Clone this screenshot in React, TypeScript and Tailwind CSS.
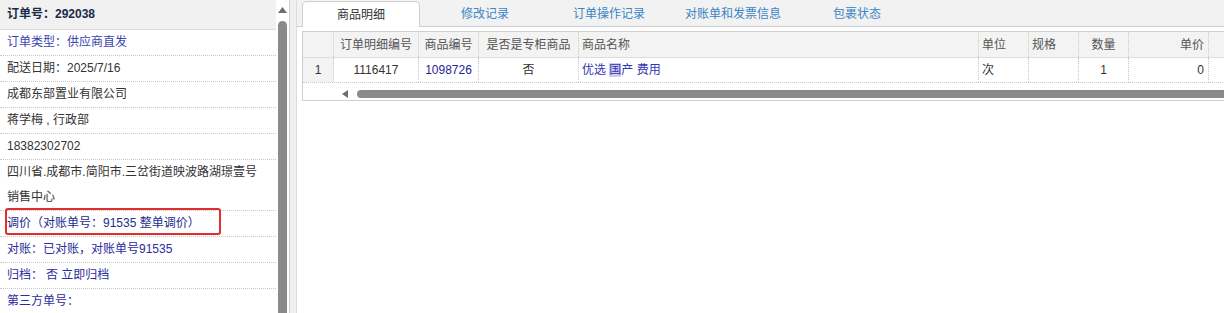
import React from "react";

const rows = [
  { text: "订单类型：供应商直发", cls: "text-[#3a43b3]" },
  { text: "配送日期：2025/7/16", cls: "text-[#333]" },
  { text: "成都东部置业有限公司", cls: "text-[#333]" },
  { text: "蒋学梅 , 行政部", cls: "text-[#333]" },
  { text: "18382302702", cls: "text-[#333]" },
];

const cols = [
  { title: "订单明细编号", w: "w-[85px]", align: "justify-center", value: "1116417", vcls: "text-[#333]" },
  { title: "商品编号", w: "w-[60px]", align: "justify-center", value: "1098726", vcls: "text-[#1f2396]" },
  { title: "是否是专柜商品", w: "w-[100px]", align: "justify-center", value: "否", vcls: "text-[#333]" },
  { title: "商品名称", w: "w-[400px]", align: "justify-start pl-[3px]", value: "", vcls: "text-[#3535b0]" },
  { title: "单位", w: "w-[50px]", align: "justify-start pl-[3px]", value: "次", vcls: "text-[#333]" },
  { title: "规格", w: "w-[50px]", align: "justify-start pl-[3px]", value: "", vcls: "text-[#333]" },
  { title: "数量", w: "w-[50px]", align: "justify-center", value: "1", vcls: "text-[#333]" },
  { title: "单价", w: "w-[80px]", align: "justify-end pr-[4px]", value: "0", vcls: "text-[#333]" },
  { title: "", w: "w-[80px]", align: "justify-center", value: "", vcls: "text-[#333]" },
];

const tabs = ["商品明细", "修改记录", "订单操作记录", "对账单和发票信息", "包裹状态"];

export default function App() {
  return (
    <div className="flex h-[313px] w-[1224px] overflow-hidden bg-white text-[12px] font-['Liberation_Sans','Noto_Sans_CJK_SC',sans-serif]">
      {/* left info panel */}
      <div className="w-[276px] flex-none">
        <div className="h-[30px] border-b border-[#dcdcdc] bg-[#f1f1f1] px-[7px] leading-[29px] font-bold text-[#1b2a4a]">
          订单号：292038
        </div>
        {rows.map((r) => (
          <div key={r.text} className={`border-b border-dotted border-[#c8c8c8] px-[7px] leading-[25px] ${r.cls}`}>
            {r.text}
          </div>
        ))}
        <div className="border-b border-dotted border-[#c8c8c8] px-[7px] leading-[25px] text-[#333]">
          四川省.成都市.简阳市.三岔街道映波路湖璟壹号
          <br />
          销售中心
        </div>
        <div className="relative border-b border-dotted border-[#c8c8c8] px-[7px] leading-[25px] text-[#232c8e]">
          调价（对账单号：91535 整单调价）
          <div className="absolute left-[5px] top-[-3px] h-[27px] w-[216px] rounded-[3px] border-2 border-[#e02e2e]" />
        </div>
        <div className="border-b border-dotted border-[#c8c8c8] px-[7px] leading-[25px] text-[#2c2c9e]">
          对账：已对账，对账单号91535
        </div>
        <div className="border-b border-dotted border-[#c8c8c8] px-[7px] leading-[25px] text-[#2c2c9e]">
          归档：<span className="ml-[3px]">否 立即归档</span>
        </div>
        <div className="border-b border-dotted border-[#c8c8c8] px-[7px] leading-[25px] text-[#2c2c9e]">
          第三方单号：
        </div>
      </div>

      {/* vertical scrollbar */}
      <div className="flex w-[13px] flex-none flex-col pl-[2px] pt-[7px]">
        <svg width="9" height="6" viewBox="0 0 9 6">
          <path d="M4.5 0 L9 6 L0 6 Z" fill="#6e6e6e" />
        </svg>
        <div className="mt-[8px] w-[9px] flex-1 rounded-t-[5px] bg-[#8a8a8a]" />
      </div>
      <div className="w-[1px] flex-none bg-[#d2d2d2]" />
      <div className="w-[6px] flex-none bg-[#efefef]" />

      {/* right panel */}
      <div className="flex min-w-0 flex-1 flex-col overflow-hidden border-l border-[#dcdcdc]">
        <div className="flex h-[27px] flex-none gap-[6px] border-b border-[#cfcfcf] bg-[#f2f2f2] pl-[5px] pt-[1px]">
          {tabs.map((t, i) =>
            i === 0 ? (
              <div
                key={t}
                className="flex h-[26px] w-[118px] flex-none items-center justify-center rounded-t-[5px] border border-b-0 border-[#cfcfcf] bg-white text-[#333]"
              >
                {t}
              </div>
            ) : (
              <div key={t} className="flex h-[25px] w-[118px] flex-none items-center justify-center text-[#3a85c6]">
                {t}
              </div>
            )
          )}
        </div>

        <div className="ml-[5px] mt-[4px] w-[1000px] flex-none border border-[#cfcfcf]">
          {/* header */}
          <div className="flex h-[26px] border-b border-[#dddddd] bg-[#f3f3f3] text-[#555]">
            <div className="w-[31px] flex-none border-r border-dotted border-[#c8c8c8]" />
            {cols.map((c, i) => (
              <div key={i} className={`flex flex-none items-center border-r border-dotted border-[#c8c8c8] ${c.w} ${c.align}`}>
                {c.title}
              </div>
            ))}
          </div>
          {/* data row */}
          <div className="flex h-[25px] border-b border-dotted border-[#c8c8c8] text-[#333]">
            <div className="flex w-[31px] flex-none items-center justify-center border-r border-dotted border-[#c8c8c8] bg-[#f3f3f3]">
              1
            </div>
            {cols.map((c, i) => (
              <div key={i} className={`flex flex-none items-center border-r border-dotted border-[#c8c8c8] ${c.w} ${c.align} ${c.vcls}`}>
                {c.title === "商品名称" ? (
                  <span>
                    优选 <span className="bg-[#cdcdf3]">国</span>产 费用
                  </span>
                ) : (
                  c.value
                )}
              </div>
            ))}
          </div>
          {/* horizontal scrollbar */}
          <div className="flex h-[17px] items-center pl-[39px] pt-[4px]">
            <svg width="6" height="8" viewBox="0 0 6 8" className="flex-none">
              <path d="M0 4 L6 0 L6 8 Z" fill="#6e6e6e" />
            </svg>
            <div className="ml-[9px] h-[8px] flex-1 rounded-l-[4px] bg-[#8a8a8a]" />
          </div>
        </div>
      </div>
    </div>
  );
}
